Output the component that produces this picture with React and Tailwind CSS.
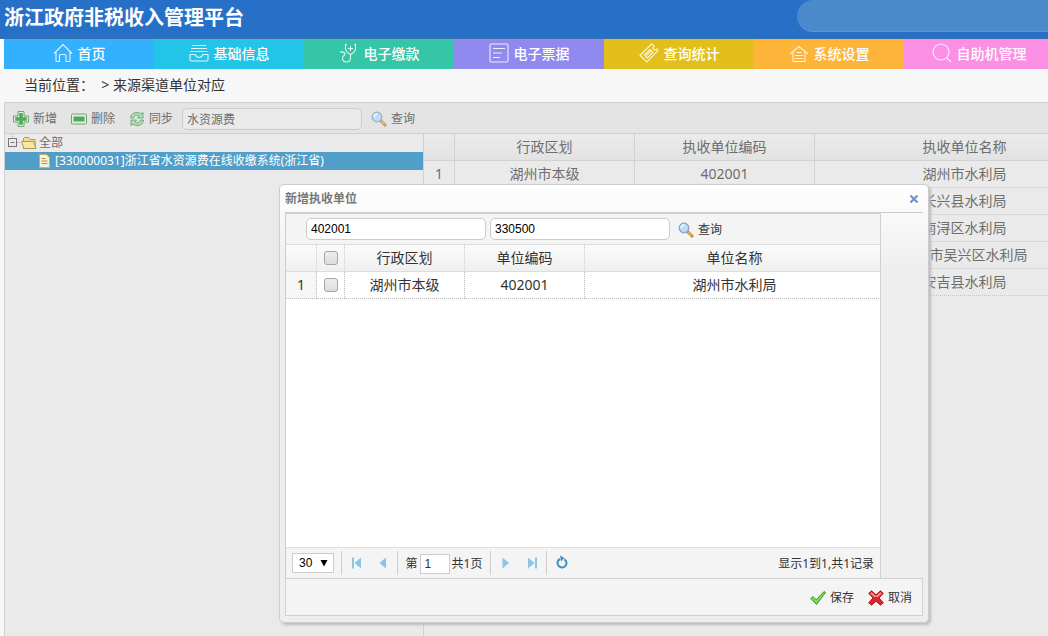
import { useState } from "react";

const NAV = [
  { label: "首页", icon: "home", color: "bg-[#33b1ff]" },
  { label: "基础信息", icon: "inbox", color: "bg-[#22c4e8]" },
  { label: "电子缴款", icon: "pay", color: "bg-[#34c6a7]" },
  { label: "电子票据", icon: "bill", color: "bg-[#9089ef]" },
  { label: "查询统计", icon: "ticket", color: "bg-[#e3bf1b]" },
  { label: "系统设置", icon: "settings", color: "bg-[#feb339]" },
  { label: "自助机管理", icon: "search", color: "bg-[#fa8fe4]" },
];

const UNITS = [
  { area: "湖州市本级", code: "402001", name: "湖州市水利局" },
  { area: "长兴县", code: "402001", name: "长兴县水利局" },
  { area: "南浔区", code: "402001", name: "南浔区水利局" },
  { area: "吴兴区", code: "402001", name: "湖州市吴兴区水利局" },
  { area: "安吉县", code: "402001", name: "安吉县水利局" },
];

const RESULTS = [{ area: "湖州市本级", code: "402001", name: "湖州市水利局" }];

const NAV_PATHS = {
  home: (
    <path d="M1 10.500 10 1.500l9 9M3 9v8.500q0 1 1 1h2.500v-6q0-1 1-1h4.500q1 0 1 1v6H16q1 0 1-1V9" />
  ),
  inbox: (
    <>
      <path d="M3 2.500h14M2 5.500h16M1.500 8.500h17" />
      <path d="M1 11.500h5q1.500 3 4 3t4-3h5v5q0 1.500-1.500 1.500h-15q-1.500 0-1.500-1.500z" />
    </>
  ),
  pay: (
    <>
      <path d="M8 1.500H6.500v4q0 3.500 5 6 5-2.500 5-6v-4H15M11.500 3v5M9 5.500h5" />
      <path d="M11.500 11.500v3q0 4.500-4 4.500t-4-3.500q0-1.500 1.500-3t0-3q-1.500-1-4-.5" />
    </>
  ),
  bill: (
    <>
      <rect x="1" y="1" width="18" height="18" rx="1.500" />
      <path d="M4 5.500h12M4 10h9M4 14.500h7" />
    </>
  ),
  ticket: (
    <>
      <path d="M1 12.500 12.500 1l2.500 2-1 2.500 1.500 1.500L18 6l1 1.500L8 19z" />
      <path d="M5.500 12 11 6.500l3 3L8.500 15zM7.500 12.500l4-4" />
    </>
  ),
  settings: (
    <>
      <path d="M1 11 10 3.500l9 7.500M4 9v9.500h12V9" />
      <path d="M7.500 9.500h5M6 12.500h8M6 15.500h8" />
    </>
  ),
  search: (
    <>
      <circle cx="9" cy="9" r="8" />
      <path d="m15 15 4 4" />
    </>
  ),
};

function NavIcon({ name }) {
  return (
    <svg
      className="size-5 shrink-0"
      viewBox="0 0 20 20"
      fill="none"
      stroke="white"
      strokeOpacity="0.850"
      strokeWidth="1.100"
    >
      {NAV_PATHS[name]}
    </svg>
  );
}

function AddIcon() {
  return (
    <svg className="size-4" viewBox="0 0 16 16">
      <path
        d="M5 .5h6V5h4.500v6H11v4.500H5V11H.5V5H5z"
        fill="#e3f3df"
        stroke="#4d9a4d"
      />
      <path d="M6.500 2.500h3v4h4v3h-4v4h-3v-4h-4v-3h4z" fill="#2f9a3c" stroke="#2f9a3c" strokeWidth=".6" />
    </svg>
  );
}

function RemoveIcon() {
  return (
    <svg className="size-4" viewBox="0 0 16 16">
      <rect x=".5" y="3" width="15" height="10" rx="1" fill="#e3f3df" stroke="#4d9a4d" />
      <rect x="2.500" y="5.500" width="11" height="5" fill="#2f9a3c" />
    </svg>
  );
}

function SyncIcon() {
  return (
    <svg className="size-4" viewBox="0 0 16 16" fill="#a9dca6" stroke="#3f8f46" strokeWidth=".8">
      <path d="M1.500 7Q2 1.500 8 1.500q2.500 0 4 1.500L14 1.500V7H8.500l1.700-2Q6 2.500 4.500 7z" />
      <path d="M14.500 9Q14 14.500 8 14.500q-2.500 0-4-1.500L2 14.500V9h5.500l-1.700 2Q10 13.500 11.500 9z" />
    </svg>
  );
}

function SearchIcon() {
  return (
    <svg className="size-4" viewBox="0 0 16 16">
      <path d="m10 10 4 4" stroke="#b87a2e" strokeWidth="3" strokeLinecap="round" />
      <path d="m10 10 3.800 3.800" stroke="#f3bd63" strokeWidth="1.500" />
      <circle cx="6" cy="6" r="4.800" fill="#b9dcf7" stroke="#8a9fc0" strokeWidth="1.200" />
      <path d="M3.200 6q0-3 3-3" stroke="white" strokeWidth="1.400" fill="none" />
    </svg>
  );
}

function SaveIcon() {
  return (
    <svg className="size-4" viewBox="0 0 16 16">
      <path
        d="M.8 8.500 3 6.500l3.200 3.300L14 1.500l1.500 1L6.500 14.500z"
        fill="#7ddb57"
        stroke="#2c8a1e"
        strokeWidth=".9"
        strokeLinejoin="round"
      />
    </svg>
  );
}

function CancelIcon() {
  return (
    <svg className="size-4" viewBox="0 0 16 16">
      <path
        d="m3.500.8 4.500 4 4.500-4 2.800 2.500L11 8l4.300 4.700-2.800 2.500-4.500-4-4.500 4L.7 12.700 5 8 .7 3.300z"
        fill="#e0242a"
        stroke="#a80f16"
        strokeWidth=".9"
        strokeLinejoin="round"
      />
      <path d="m3.500 2.300 4.500 4 4.500-4 1.200 1L10 7H6L2.300 3.300z" fill="#f59a9c" />
    </svg>
  );
}

function ToolButton({ icon, children, onClick }) {
  return (
    <button type="button" onClick={onClick} className="flex items-center gap-1">
      {icon}
      {children}
    </button>
  );
}

function Separator() {
  return <span className="h-6 w-px bg-[#ccc]" />;
}

function PageButton({ label, d }) {
  return (
    <button type="button" aria-label={label} className="flex size-[26px] items-center justify-center">
      <svg className="size-4" viewBox="0 0 16 16" fill="#8cc4e4">
        <path d={d} />
      </svg>
    </button>
  );
}

function Header() {
  return (
    <header className="flex h-[39px] justify-between border-b border-[#3a70a8] bg-[#2670c8]">
      <h1 className="pl-1 text-[20px] leading-9 font-bold text-white">
        浙江政府非税收入管理平台
      </h1>
      <div className="h-8 w-[251px] rounded-l-full border-b border-[#5c96d0] bg-[#4a8aca]" />
    </header>
  );
}

function Nav() {
  return (
    <nav className="flex h-[30px] bg-linear-to-r from-white from-[4px] to-[#fa8fe4] to-[4px] pl-1 text-[14px] font-medium text-white">
      {NAV.map((item) => (
        <a
          key={item.label}
          href="#"
          className={`flex w-[150px] shrink-0 items-center justify-center gap-[5px] pb-0.5 ${item.color}`}
        >
          <NavIcon name={item.icon} />
          {item.label}
        </a>
      ))}
    </nav>
  );
}

function Tree() {
  return (
    <ul className="w-[419px] shrink-0 border-r border-[#d0d0d0] leading-5">
      <li className="flex h-[18px] items-center pl-[3px]">
        <svg className="h-[18px] w-[13px]" viewBox="0 0 13 18" fill="none" stroke="#777">
          <rect x=".5" y="4.500" width="8" height="8" />
          <path d="M2.500 8.500h4" />
          <path d="M9 8.500h4M4.500 0v4" stroke="#aaa" strokeDasharray="1 1" />
        </svg>
        <svg className="h-[18px] w-4" viewBox="0 0 16 18" fill="#f3dd8c" stroke="#b59a45">
          <path d="M2.500 14.500V4.500l1-1h4l1.500 2h5l.5 9z" />
          <path d="M3 14.500.5 7.500h12l2.500 7z" fill="#f8e8a8" />
        </svg>
        <span className="pl-0.5">全部</span>
      </li>
      <li className="flex h-[18px] items-center bg-[#519fc8] pl-8 text-white">
        <svg className="h-[18px] w-4" viewBox="0 0 16 18">
          <path d="M2.500 2.500h7l3 3v10h-10z" fill="#fbf3cf" stroke="#c9b067" />
          <path d="M4.500 6.500h4M4.500 9h6M4.500 11.500h6" stroke="#a8955a" />
        </svg>
        <span className="pl-0.5">[330000031]浙江省水资源费在线收缴系统(浙江省)</span>
      </li>
    </ul>
  );
}

function UnitTable() {
  return (
    <div className="min-w-0 flex-1 overflow-hidden">
      <table className="w-[691px] table-fixed border-separate border-spacing-0 text-center text-[14px] leading-[26px]">
        <thead>
          <tr className="bg-linear-to-b from-[#ebebeb] to-[#e2e2e2] *:border-r *:border-b *:border-[#d2d2d2] *:p-0 *:font-normal">
            <th className="w-[31px]"></th>
            <th className="w-[180px]">行政区划</th>
            <th className="w-[180px]">执收单位编码</th>
            <th>执收单位名称</th>
          </tr>
        </thead>
        <tbody>
          {UNITS.map((unit, i) => (
            <tr
              key={unit.name}
              className="*:border-r *:border-b *:border-r-[#d2d2d2] *:border-b-[#c4c4c4] *:p-0 *:[border-bottom-style:dotted]"
            >
              <td>{i + 1}</td>
              <td>{unit.area}</td>
              <td>{unit.code}</td>
              <td>{unit.name}</td>
            </tr>
          ))}
        </tbody>
      </table>
    </div>
  );
}

const textBox = "w-[180px] rounded-[5px] border px-1 h-[22px] outline-none";
const checkBox =
  "block mx-auto size-[14px] appearance-none rounded-[3px] border border-[#a5a5a5] bg-linear-to-b from-[#eee] to-[#ddd] checked:bg-[#519fc8]";

function ResultTable() {
  const [checked, setChecked] = useState(false);

  return (
    <div className="flex-1 overflow-hidden bg-white">
      <table className="w-[599px] table-fixed border-separate border-spacing-0 text-center text-[14px] leading-[26px] text-[#333]">
        <thead>
          <tr className="bg-linear-to-b from-[#fbfbfb] to-[#efefef] *:border-r *:border-b *:border-r-[#ccc] *:border-b-[#ddd] *:p-0 *:font-normal *:[border-right-style:dotted]">
            <th className="w-[31px]"></th>
            <th className="w-[28px]">
              <input
                type="checkbox"
                aria-label="全选"
                className={checkBox}
                checked={checked}
                onChange={() => setChecked(!checked)}
              />
            </th>
            <th className="w-[120px]">行政区划</th>
            <th className="w-[120px]">单位编码</th>
            <th>单位名称</th>
          </tr>
        </thead>
        <tbody>
          {RESULTS.map((row, i) => (
            <tr
              key={row.name}
              className="*:border-r *:border-b *:border-dotted *:border-[#bbb] *:p-0"
            >
              <td className="bg-[#f6f6f6]">{i + 1}</td>
              <td>
                <input
                  type="checkbox"
                  aria-label={row.name}
                  className={checkBox}
                  checked={checked}
                  onChange={() => setChecked(!checked)}
                />
              </td>
              <td>{row.area}</td>
              <td>{row.code}</td>
              <td>{row.name}</td>
            </tr>
          ))}
        </tbody>
      </table>
    </div>
  );
}

function Pager() {
  return (
    <div className="flex h-[31px] items-center border-t border-[#ddd] bg-[#f4f4f4] px-1.5">
      <div className="relative mr-[7px]">
        <select
          aria-label="每页条数"
          className="block h-5 w-[42px] appearance-none border border-[#ccc] bg-white pl-1.5 font-['Liberation_Sans',sans-serif] text-[12px] text-black"
        >
          <option>30</option>
          <option>50</option>
        </select>
        <svg className="pointer-events-none absolute top-1.5 right-1.5 size-2" viewBox="0 0 8 8">
          <path d="M.5 1h7L4 7.500z" />
        </svg>
      </div>
      <Separator />
      <div className="flex w-[55px] justify-center">
        <PageButton label="首页" d="M3 2.500h2v11H3zM12 2.500v11L5.500 8z" />
        <PageButton label="上一页" d="M11 2.500v11L4.500 8z" />
      </div>
      <Separator />
      <label className="flex w-[92px] items-center justify-center gap-0.5 pt-px whitespace-nowrap">
        第
        <input
          defaultValue="1"
          className="h-5 w-[30px] border border-[#ccc] bg-white px-1 font-['Liberation_Sans',sans-serif] outline-none"
        />
        共1页
      </label>
      <Separator />
      <div className="flex w-[55px] justify-center">
        <PageButton label="下一页" d="M4.500 2.500v11L11 8z" />
        <PageButton label="末页" d="M4 2.500v11L10.500 8zM11 2.500h2v11h-2z" />
      </div>
      <Separator />
      <button type="button" aria-label="刷新" className="flex h-[26px] w-[30px] items-center justify-center">
        <svg className="size-4" viewBox="0 0 16 16" fill="none" stroke="#3f8fbf" strokeWidth="2">
          <path d="M10.500 4.300A4.500 4.500 0 1 1 6 4" />
          <path d="M6 .5 10.500 3 7 6.500z" fill="#3f8fbf" stroke="none" />
        </svg>
      </button>
      <span className="ml-auto pt-0.5">显示1到1,共1记录</span>
    </div>
  );
}

function AddUnitDialog({ onClose }) {
  return (
    <div
      role="dialog"
      aria-labelledby="dialog-title"
      className="absolute top-[81px] left-[274px] flex w-[650px] flex-col rounded-[5px] border border-[#ccc] bg-linear-to-b from-white to-[#eee] to-20% px-[5px] pb-1.5 text-[#333] shadow-[2px_2px_3px_#bbb]"
    >
      <div className="flex h-[27px] items-center justify-between pr-1">
        <h2 id="dialog-title" className="font-bold text-[#777]">
          新增执收单位
        </h2>
        <button type="button" aria-label="关闭" onClick={onClose}>
          <svg className="size-[10px]" viewBox="0 0 10 10" stroke="#7193cb" strokeWidth="2.200">
            <path d="m1.500 1.500 7 7M8.500 1.500l-7 7" />
          </svg>
        </button>
      </div>
      <div className="flex h-[366px] border-t border-l border-[#ccc]">
        <div className="flex w-[595px] flex-col border-t border-r border-[#d0d0d0]">
          <div className="flex h-[31px] items-center gap-1 border-b border-[#ddd] bg-[#f4f4f4] pl-5 font-['Liberation_Sans',sans-serif]">
            <input
              aria-label="单位编码"
              defaultValue="402001"
              className={`${textBox} border-[#ccc] bg-white text-black`}
            />
            <input
              aria-label="行政区划"
              defaultValue="330500"
              className={`${textBox} border-[#ccc] bg-white text-black`}
            />
            <div className="pt-0.5 pl-1 font-['Noto_Sans','Noto_Sans_CJK_SC',sans-serif]">
              <ToolButton icon={<SearchIcon />}>查询</ToolButton>
            </div>
          </div>
          <ResultTable />
          <Pager />
        </div>
      </div>
      <div className="flex h-[38px] items-center justify-end gap-[14px] border border-[#d0d0d0] bg-[#f4f4f4] pt-0.5 pr-2.5">
        <ToolButton icon={<SaveIcon />}>保存</ToolButton>
        <ToolButton icon={<CancelIcon />} onClick={onClose}>
          取消
        </ToolButton>
      </div>
    </div>
  );
}

export default function App() {
  const [open, setOpen] = useState(true);

  return (
    <div className="flex h-screen flex-col overflow-hidden bg-[#f7f7f7] font-['Noto_Sans','Noto_Sans_CJK_SC',sans-serif] text-[12px]">
      <Header />
      <Nav />
      <div className="h-[33px] pl-6 text-[14px] leading-8 text-[#333]">
        当前位置：&nbsp; &gt; 来源渠道单位对应
      </div>
      <main className="relative ml-1 flex flex-1 flex-col border-t border-l border-[#d0d0d0] bg-[#eaeaea] text-[#6e6e6e]">
        <div className="flex h-[31px] shrink-0 items-center border-b border-[#d0d0d0] bg-[#e4e4e4] pt-0.5 pl-2">
          <div className="flex gap-[14px] pr-[9px] [&_svg]:opacity-80">
            <ToolButton icon={<AddIcon />} onClick={() => setOpen(true)}>
              新增
            </ToolButton>
            <ToolButton icon={<RemoveIcon />}>删除</ToolButton>
            <ToolButton icon={<SyncIcon />}>同步</ToolButton>
          </div>
          <input
            aria-label="关键字"
            defaultValue="水资源费"
            className={`${textBox} border-[#cdcdcd] bg-[#eaeaea]`}
          />
          <div className="pl-[9px] [&_svg]:opacity-80">
            <ToolButton icon={<SearchIcon />}>查询</ToolButton>
          </div>
        </div>
        <div className="flex flex-1">
          <Tree />
          <UnitTable />
        </div>
        {open && <AddUnitDialog onClose={() => setOpen(false)} />}
      </main>
    </div>
  );
}
